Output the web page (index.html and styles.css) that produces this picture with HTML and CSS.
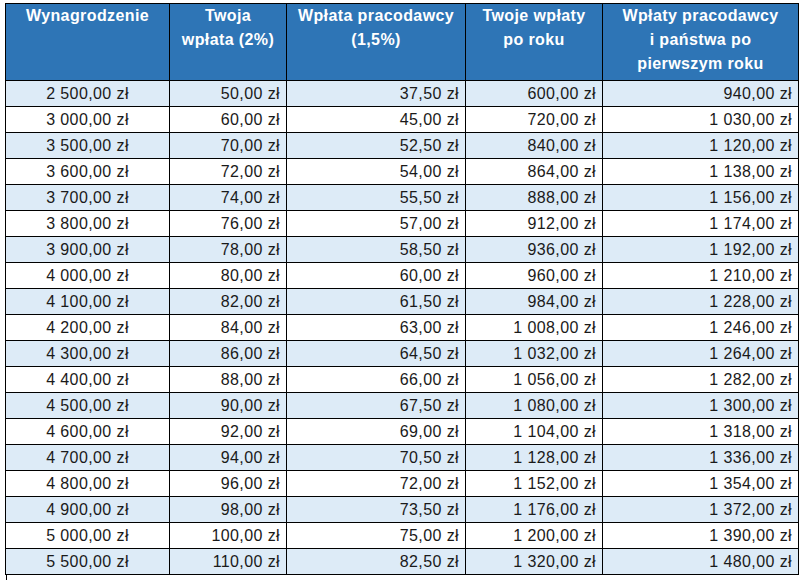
FILE: index.html
```html
<!DOCTYPE html>
<html lang="pl">
<head>
<meta charset="utf-8">
<link rel="stylesheet" href="styles.css">
</head>
<body>
<table class="grid">
  <colgroup>
    <col class="c1"><col class="c2"><col class="c3"><col class="c4"><col class="c5">
  </colgroup>
  <thead>
    <tr>
      <th>Wynagrodzenie</th>
      <th>Twoja<br>wpłata (2%)</th>
      <th>Wpłata pracodawcy<br>(1,5%)</th>
      <th>Twoje wpłaty<br>po roku</th>
      <th>Wpłaty pracodawcy<br>i państwa po<br>pierwszym roku</th>
    </tr>
  </thead>
  <tbody>
    <tr class="alt"><td>2 500,00 zł</td><td>50,00 zł</td><td>37,50 zł</td><td>600,00 zł</td><td>940,00 zł</td></tr>
    <tr><td>3 000,00 zł</td><td>60,00 zł</td><td>45,00 zł</td><td>720,00 zł</td><td>1 030,00 zł</td></tr>
    <tr class="alt"><td>3 500,00 zł</td><td>70,00 zł</td><td>52,50 zł</td><td>840,00 zł</td><td>1 120,00 zł</td></tr>
    <tr><td>3 600,00 zł</td><td>72,00 zł</td><td>54,00 zł</td><td>864,00 zł</td><td>1 138,00 zł</td></tr>
    <tr class="alt"><td>3 700,00 zł</td><td>74,00 zł</td><td>55,50 zł</td><td>888,00 zł</td><td>1 156,00 zł</td></tr>
    <tr><td>3 800,00 zł</td><td>76,00 zł</td><td>57,00 zł</td><td>912,00 zł</td><td>1 174,00 zł</td></tr>
    <tr class="alt"><td>3 900,00 zł</td><td>78,00 zł</td><td>58,50 zł</td><td>936,00 zł</td><td>1 192,00 zł</td></tr>
    <tr><td>4 000,00 zł</td><td>80,00 zł</td><td>60,00 zł</td><td>960,00 zł</td><td>1 210,00 zł</td></tr>
    <tr class="alt"><td>4 100,00 zł</td><td>82,00 zł</td><td>61,50 zł</td><td>984,00 zł</td><td>1 228,00 zł</td></tr>
    <tr><td>4 200,00 zł</td><td>84,00 zł</td><td>63,00 zł</td><td>1 008,00 zł</td><td>1 246,00 zł</td></tr>
    <tr class="alt"><td>4 300,00 zł</td><td>86,00 zł</td><td>64,50 zł</td><td>1 032,00 zł</td><td>1 264,00 zł</td></tr>
    <tr><td>4 400,00 zł</td><td>88,00 zł</td><td>66,00 zł</td><td>1 056,00 zł</td><td>1 282,00 zł</td></tr>
    <tr class="alt"><td>4 500,00 zł</td><td>90,00 zł</td><td>67,50 zł</td><td>1 080,00 zł</td><td>1 300,00 zł</td></tr>
    <tr><td>4 600,00 zł</td><td>92,00 zł</td><td>69,00 zł</td><td>1 104,00 zł</td><td>1 318,00 zł</td></tr>
    <tr class="alt"><td>4 700,00 zł</td><td>94,00 zł</td><td>70,50 zł</td><td>1 128,00 zł</td><td>1 336,00 zł</td></tr>
    <tr><td>4 800,00 zł</td><td>96,00 zł</td><td>72,00 zł</td><td>1 152,00 zł</td><td>1 354,00 zł</td></tr>
    <tr class="alt"><td>4 900,00 zł</td><td>98,00 zł</td><td>73,50 zł</td><td>1 176,00 zł</td><td>1 372,00 zł</td></tr>
    <tr><td>5 000,00 zł</td><td>100,00 zł</td><td>75,00 zł</td><td>1 200,00 zł</td><td>1 390,00 zł</td></tr>
    <tr class="alt"><td>5 500,00 zł</td><td>110,00 zł</td><td>82,50 zł</td><td>1 320,00 zł</td><td>1 480,00 zł</td></tr>
  </tbody>
</table>
<div class="tick"></div>
</body>
</html>
```

FILE: styles.css
```css
html, body {
  margin: 0;
  padding: 0;
  background: #ffffff;
}
body {
  font-family: "Liberation Sans", Arial, sans-serif;
  color: #1a1a1a;
  padding: 3px 0 0 5px;
}
.grid {
  border-collapse: collapse;
  table-layout: fixed;
  width: 793px;
}
.c1 { width: 164px; }
.c2 { width: 117px; }
.c3 { width: 179px; }
.c4 { width: 137px; }
.c5 { width: 196px; }
.grid th,
.grid td {
  border: 1px solid #000;
  padding: 0 6px;
}
.grid th {
  background: #2e75b6;
  color: #ffffff;
  font-weight: bold;
  font-size: 16px;
  letter-spacing: 0.4px;
  line-height: 24px;
  height: 76px;
  vertical-align: top;
  text-align: center;
  padding-top: 0;
}
.grid td {
  font-size: 16px;
  letter-spacing: 0.4px;
  height: 25px;
  line-height: 25px;
  text-align: right;
  white-space: nowrap;
}
.grid td:first-child {
  text-align: center;
}
.grid tr.alt td {
  background: #ddebf7;
}
.tick {
  width: 1px;
  height: 8px;
  margin-left: 1px;
  background: #000;
}
```
